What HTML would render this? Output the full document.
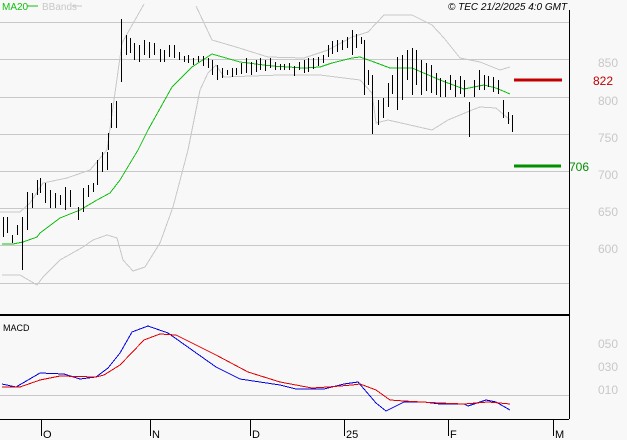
<!DOCTYPE html>
<html><head><meta charset="utf-8"><style>
html,body{margin:0;padding:0;background:#f8f8f8;}
svg{display:block;font-family:"Liberation Sans",sans-serif;}
</style></head><body>
<svg width="627" height="440" viewBox="0 0 627 440" xmlns="http://www.w3.org/2000/svg">
<rect width="627" height="440" fill="#f8f8f8"/>
<g stroke="#c8c8c8" stroke-width="1" shape-rendering="crispEdges">
<line x1="0" y1="22.5" x2="569" y2="22.5"/>
<line x1="0" y1="59.5" x2="569" y2="59.5"/>
<line x1="0" y1="97.5" x2="569" y2="97.5"/>
<line x1="0" y1="134.5" x2="569" y2="134.5"/>
<line x1="0" y1="171.5" x2="569" y2="171.5"/>
<line x1="0" y1="208.5" x2="569" y2="208.5"/>
<line x1="0" y1="245.5" x2="569" y2="245.5"/>
<line x1="0" y1="283.5" x2="569" y2="283.5"/>
<line x1="0" y1="395.5" x2="569" y2="395.5"/>
</g>
<g fill="#c8c8c8" font-size="12">
<text x="598" y="67">850</text><text x="598" y="105">800</text><text x="598" y="142">750</text>
<text x="598" y="179">700</text><text x="598" y="216">650</text><text x="598" y="253">600</text>
<text x="598" y="348">050</text><text x="598" y="371">030</text><text x="598" y="394">010</text>
</g>
<g shape-rendering="crispEdges" fill="none">
<polyline stroke="#c8c8c8" points="0,212 20,212 30,203 43,183 67,178 90,170 107,150 122,43 135,20 144,4"/>
<polyline stroke="#c8c8c8" points="196,6 212,40 236,47 268,57 304,58 328,50 352,37 368,32 384,15 412,15 432,25 444,38 460,58 480,62 500,70 510,67"/>
<polyline stroke="#c8c8c8" points="2,275 20,275 37,285 43,277 60,260 83,247 93,240 107,235 117,238 123,260 133,271 145,267 160,243 173,207 188,150 200,90 208,73 216,65 224,77 280,75 320,75 360,80 372,93 376,123 388,120 432,130 448,120 472,110 480,107 496,108 510,120"/>
<polyline stroke="#10c010" points="2,244 13,244 23,242 37,237 40,233 60,218 80,210 97,200 110,193 120,180 138,150 148,130 172,87 192,67 212,54 240,62 272,66 304,68 320,67 332,63 352,58 360,57 374,62 390,68 412,68 440,80 464,89 484,85 496,88 510,94"/>
</g>
<path transform="translate(0.5,0)" stroke="#000" stroke-width="1" shape-rendering="crispEdges" fill="none" d="M3,217V237M7,217V233M12,235V243M17,225V235M22,217V270M27,192V230M32,193V208M37,180V195M40,178V193M45,183V203M50,190V208M55,193V208M60,195V205M65,187V210M70,190V207M78,207V220M83,188V212M88,185V197M93,183V192M97,160V185M102,152V172M107,152V170M108,133V150M111,103V128M116,101V128M121,19V82M126,35V55M130,38V53M134,43V60M139,45V62M144,40V55M149,42V58M154,43V55M160,49V62M164,50V62M169,45V57M174,45V58M179,52V60M184,56V62M188,55V63M193,58V65M198,56V62M203,56V66M208,58V68M212,60V75M217,65V80M222,68V78M227,70V75M232,68V77M236,68V75M241,63V74M246,58V73M251,62V75M256,60V72M260,58V70M265,60V71M270,58V68M275,62V70M280,64V70M284,64V70M289,63V70M294,66V76M299,62V70M304,60V73M308,58V72M313,58V69M318,57V66M323,55V63M328,45V57M332,41V54M337,40V52M342,40V50M347,37V48M352,30V55M356,34V48M361,37V44M364,40V95M368,70V85M372,75V134M378,100V125M383,98V118M388,83V107M392,75V94M397,57V110M402,55V100M407,50V80M412,48V95M416,50V85M421,60V95M426,63V91M431,65V93M436,73V95M440,78V97M445,80V97M450,75V90M455,80V97M460,76V94M464,80V97M469,102V137M474,80V97M479,70V90M484,75V90M488,76V87M493,77V92M498,80V94M503,100V118M508,112V124M512,115V132"/>
<line x1="514" y1="80" x2="562" y2="80" stroke="#c00000" stroke-width="3"/>
<text x="593" y="85" fill="#c00000" font-size="12">822</text>
<line x1="514" y1="166" x2="561" y2="166" stroke="#009000" stroke-width="3"/>
<text x="569" y="171" fill="#009000" font-size="12">706</text>
<line x1="569.5" y1="10" x2="569.5" y2="419" stroke="#000"/>
<line x1="0" y1="315" x2="569" y2="315" stroke="#000" stroke-width="2"/>
<line x1="0" y1="419.5" x2="569" y2="419.5" stroke="#000"/>
<text x="2" y="10" fill="#10c010" font-size="10">MA20</text>
<line x1="27" y1="6" x2="38" y2="6" stroke="#10c010"/>
<text x="42" y="10" fill="#c8c8c8" font-size="10">BBands</text>
<line x1="72" y1="6" x2="82" y2="6" stroke="#c8c8c8"/>
<text x="448" y="10" fill="#000" font-size="10" font-style="italic">© TEC 21/2/2025 4:0 GMT</text>
<text x="3" y="331" fill="#000" font-size="9">MACD</text>
<g shape-rendering="crispEdges" fill="none">
<polyline stroke="#0000e0" points="2,384 16,387 40,373 64,374 80,379 96,377 108,368 120,353 132,332 148,326 168,333 192,350 216,367 240,379 280,385 296,389 324,389 344,384 358,382 376,403 386,411 404,402 424,402 440,404 464,404 468,406 486,400 496,402 510,410"/>
<polyline stroke="#e00000" points="2,387 20,387 40,380 60,376 96,377 104,375 120,365 144,340 160,334 176,335 216,355 248,372 280,382 312,388 328,387 352,385 360,384 376,390 390,400 404,401 440,403 464,404 488,402 510,404"/>
</g>
<g stroke="#000"><line x1="41.5" y1="420" x2="41.5" y2="436"/><line x1="150.5" y1="420" x2="150.5" y2="436"/><line x1="250.5" y1="420" x2="250.5" y2="436"/><line x1="344.5" y1="420" x2="344.5" y2="436"/><line x1="448.5" y1="420" x2="448.5" y2="436"/><line x1="553.5" y1="420" x2="553.5" y2="436"/></g>
<g fill="#000" font-size="11"><text x="43" y="438">O</text><text x="152" y="438">N</text><text x="252" y="438">D</text><text x="346" y="438">25</text><text x="450" y="438">F</text><text x="555" y="438">M</text></g>
</svg>
</body></html>
